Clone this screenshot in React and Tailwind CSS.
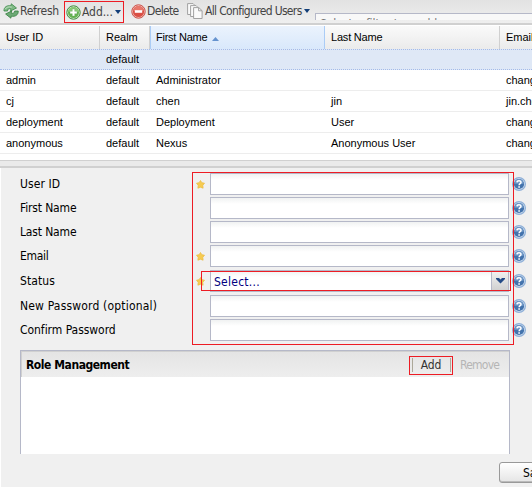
import React from "react";

const COLS = "grid grid-cols-[100px_50px_175px_175px_100px]";

const ROWS = [
  ["admin", "default", "Administrator", "", "changeme@yourcompany.com"],
  ["cj", "default", "chen", "jin", "jin.chen@company.com"],
  ["deployment", "default", "Deployment", "User", "changeme1@yourcompany.com"],
  ["anonymous", "default", "Nexus", "Anonymous User", "changeme2@yourcompany.com"],
];

const FIELDS = [
  { label: "User ID", required: true, row: "h-6", tracking: "tracking-[0.1px]" },
  { label: "First Name", row: "h-6", tracking: "tracking-[-0.15px]" },
  { label: "Last Name", row: "h-6", tracking: "tracking-[-0.15px]" },
  { label: "Email", required: true, row: "h-[25px]", tracking: "tracking-[-0.3px]" },
  { label: "Status", required: true, select: true, row: "h-[25px]", tracking: "tracking-[0.1px]" },
  { label: "New Password (optional)", row: "h-6", tracking: "tracking-[0.18px]" },
  { label: "Confirm Password", row: "h-6", tracking: "tracking-[-0.04px]" },
];

function RefreshIcon() {
  return (
    <svg className="h-4 w-4 shrink-0" viewBox="0 0 16 16">
      <path d="M1 8C.6 4.200 4 2 8 2.800L8.300.8 13.500 5 7.600 8l.3-2.200C5.500 5.300 4.500 6.300 4.500 8z" fill="#7fba85" stroke="#3b8848" strokeWidth=".8" strokeLinejoin="round" />
      <path d="M15.200 8c.4 3.800-3 6-7 5.200l-.3 2L2.600 11l6-3-.4 2.200c2.400.5 3.500-.5 3.500-2.200z" fill="#6daa76" stroke="#35803f" strokeWidth=".8" strokeLinejoin="round" />
      <path d="M2.200 6.200C3.300 4.100 5.700 3.500 8.700 4.100" fill="none" stroke="#c8e4cb" strokeWidth=".9" />
    </svg>
  );
}

function AddIcon() {
  return (
    <svg className="h-[15px] w-[15px] shrink-0" viewBox="0 0 15 15">
      <circle cx="7.500" cy="7.500" r="6.700" fill="#d6ecd0" stroke="#3f8a3d" strokeWidth="1" />
      <circle cx="7.500" cy="7.500" r="5.500" fill="#66b354" />
      <path d="M2.500 7A5 5 0 0 1 12.500 7z" fill="#8cca78" />
      <path d="M6.300 4h2.400v2.300H11v2.400H8.700V11H6.300V8.700H4V6.300h2.300z" fill="#fff" stroke="#4f9a45" strokeWidth=".3" />
    </svg>
  );
}

function DeleteIcon() {
  return (
    <svg className="h-[15px] w-[15px] shrink-0" viewBox="0 0 15 15">
      <circle cx="7.500" cy="7.500" r="6.700" fill="#f3c8c3" stroke="#c94d45" strokeWidth="1" />
      <circle cx="7.500" cy="7.500" r="5.600" fill="#da4f45" />
      <path d="M2.500 7A5 5 0 0 1 12.500 7z" fill="#e8776b" />
      <path d="M3.800 6.200h7.400v2.600H3.800z" fill="#fff" />
    </svg>
  );
}

function PagesIcon() {
  return (
    <svg className="h-4 w-4 shrink-0" viewBox="0 0 16 16" fill="#fafafa" stroke="#999" strokeWidth=".9">
      <path d="M.6.600h5.500l2 2v8.900H.6z" />
      <path d="M3.600 2.600h5.500l2 2v8.900H3.600z" />
      <path d="M6.600 4.600h5.200l3.300 3.100v7.800H6.600z" />
      <path d="M11.600 4.800v3h3.200" fill="none" />
    </svg>
  );
}

function Caret() {
  return (
    <svg className="h-[4px] w-[6px] shrink-0" viewBox="0 0 6 4">
      <path d="M0 0h6L3 4z" fill="#123e78" />
    </svg>
  );
}

function Star() {
  return (
    <svg className="h-[9px] w-[9px]" viewBox="0 0 9 9">
      <path d="M4.500.5l1.300 2.200 2.700.5-1.700 2.100.3 2.900-2.600-1-2.600 1 .3-2.900L.5 3.200l2.700-.5z" fill="#f6cb50" stroke="#ecbd45" strokeWidth=".8" strokeLinejoin="round" />
    </svg>
  );
}

function Help() {
  return (
    <svg className="h-[14px] w-[14px]" viewBox="0 0 14 14">
      <circle cx="7" cy="7" r="6.400" fill="#d5e1ef" stroke="#8fb0d8" strokeWidth="1.200" />
      <circle cx="7" cy="7" r="5.100" fill="#4373ad" />
      <path d="M2.300 6.700A4.700 4.700 0 0 1 11.700 6.700z" fill="#6f98c8" />
      <path d="M5 5.400C5.100 3.200 9 3.200 9 5.400 9 6.700 7.100 6.700 7.100 8.200" fill="none" stroke="#fff" strokeWidth="1.500" />
      <path d="M6.300 9.300h1.600v1.500H6.300z" fill="#fff" />
    </svg>
  );
}

function Toolbar() {
  return (
    <div className="flex h-[23px] shrink-0 items-start overflow-hidden whitespace-nowrap bg-gradient-to-b from-[#e2e2e2] to-[#efefef] text-[12px] leading-[22px] text-[#444]">
      <div className="flex h-[22px] w-[64px] shrink-0 items-center pl-[3px]">
        <RefreshIcon />
        <span className="ml-px tracking-[-0.25px]">Refresh</span>
      </div>
      <div className="mt-px flex h-[22px] w-[60px] shrink-0 items-center border border-[#ed1c24] pl-px">
        <AddIcon />
        <span className="ml-px w-[33px] tracking-[-0.05px]">Add...</span>
        <Caret />
      </div>
      <div className="flex h-[22px] w-[63px] shrink-0 items-center pl-[7px]">
        <DeleteIcon />
        <span className="ml-px tracking-[-0.65px]">Delete</span>
      </div>
      <div className="flex h-[22px] w-[128px] shrink-0 items-center">
        <PagesIcon />
        <span className="ml-[2px] w-[99px] tracking-[-0.65px]">All Configured Users</span>
        <Caret />
      </div>
      <div className="mt-[13px] h-[7px] flex-1 overflow-hidden border-l border-t border-[#b5b8c8] bg-[#f8f8f8] pl-1">
        <div className="mt-[3px] text-[12px] leading-[14px] tracking-[-0.1px] text-[#777]">Select a filter to enable username search</div>
      </div>
    </div>
  );
}

function UserGrid() {
  const header = "border-r border-[#d0d0d0] bg-gradient-to-b from-[#fafafa] to-[#ebebeb] pl-[6px]";
  return (
    <div className="h-[135px] shrink-0 overflow-hidden bg-white font-['Liberation_Sans',Arial,sans-serif] text-[11px] text-black">
      <div className={`${COLS} h-6 pt-px leading-[23px]`}>
        <div className={header}>User ID</div>
        <div className={header}>Realm</div>
        <div className="flex items-center border-x border-[#aaccf6] bg-gradient-to-b from-[#ebf3fd] to-[#d9e8fb] pl-[5px] tracking-[-0.25px]">
          First Name
          <svg className="ml-[5px] mt-[3px] h-[4px] w-[7px]" viewBox="0 0 7 4"><path d="M0 4h7L3.500 0z" fill="#6593cf" /></svg>
        </div>
        <div className={`${header} tracking-[-0.2px]`}>Last Name</div>
        <div className={header}>Email</div>
      </div>
      <div className={`${COLS} h-[21px] border-y border-dotted border-[#a3bae9] bg-[#dfe8f6] leading-[19px]`}>
        <div />
        <div className="pl-[6px]">default</div>
      </div>
      {ROWS.map((row) => (
        <div key={row[0]} className={`${COLS} h-[21px] border-b border-[#ededed] leading-[20px]`}>
          {row.map((cell, i) => (
            <div key={i} className="overflow-hidden whitespace-nowrap pl-[6px]">{cell}</div>
          ))}
        </div>
      ))}
    </div>
  );
}

function Field({ field }) {
  return (
    <div className={`flex items-start ${field.row}`}>
      <div className={`w-[176px] whitespace-nowrap text-[12px] leading-[23px] ${field.tracking}`}>{field.label}</div>
      <div className="flex h-[22px] w-[14px] items-center">{field.required && <Star />}</div>
      <div className="flex h-[22px] w-[299px] border border-[#b5b8c8] bg-gradient-to-b from-[#f0f2f2] via-white via-30% to-white">
        {field.select && (
          <>
            <span className="flex-1 pl-[3px] text-[12px] leading-[22px] tracking-[0.25px] text-[#00007f]">Select...</span>
            <span className="flex w-[17px] items-center justify-center border-l border-[#b5b8c8] bg-gradient-to-b from-[#f2f2f2] to-[#cfcfcf]">
              <svg className="h-[6px] w-[9px]" viewBox="0 0 9 6"><path d="M0 0h3l1.500 1.500L6 0h3v1L4.500 5.500 0 1z" fill="#244a86" /></svg>
            </span>
          </>
        )}
      </div>
      <div className="ml-[3px] flex h-[22px] items-center"><Help /></div>
    </div>
  );
}

export default function App() {
  return (
    <div className="relative flex h-[487px] w-[532px] flex-col overflow-hidden bg-[#f0f0f0] font-['DejaVu_Sans_Condensed','Noto_Sans',sans-serif] text-black">
      <Toolbar />
      <div className="h-[2px] shrink-0 bg-[#d0d0d0]" />
      <UserGrid />
      <div className="h-[8px] shrink-0 border-b-2 border-t border-[#d0d0d0] bg-[#eaeaea]" />
      <div className="flex-1 border-l border-white pl-[19px] pt-[5px]">
        {FIELDS.map((field) => <Field key={field.label} field={field} />)}
        <div className="mt-[7px] h-[104px] w-[490px] border-x border-t border-[#b5b8c8] bg-white">
          <div className="flex h-[26px] items-center border-l border-t border-[#d0d0d0] bg-gradient-to-b from-[#e4e4e4] to-[#eeeeee] pl-[4px] pt-px text-[12px]">
            <span className="w-[383px] text-[12px] font-bold tracking-[-0.45px]">Role Management</span>
            <span className="flex h-[19px] w-[44px] items-center justify-center border border-[#ed1c24] p-px">
              <span className="flex h-[14px] w-[39px] items-center justify-center border-x border-[#aca899] tracking-[-0.2px] text-[#333]">Add</span>
            </span>
            <span className="ml-[7px] tracking-[-0.75px] text-[#b5b5b5]">Remove</span>
          </div>
        </div>
        <div className="ml-[479px] mt-[8px] h-[21px] w-[70px] rounded-[3px] border border-[#999] bg-gradient-to-b from-white to-[#e5e5e5] pl-[23px] text-[12px] leading-[20px] shadow-[inset_0_-1px_0_#bbb]">Save</div>
      </div>
      <div className="absolute left-[192px] top-[172px] h-[173px] w-[322px] border border-[#ed1c24]" />
      <div className="absolute left-[201px] top-[271px] h-[20px] w-[310px] border border-[#ed1c24]" />
    </div>
  );
}
